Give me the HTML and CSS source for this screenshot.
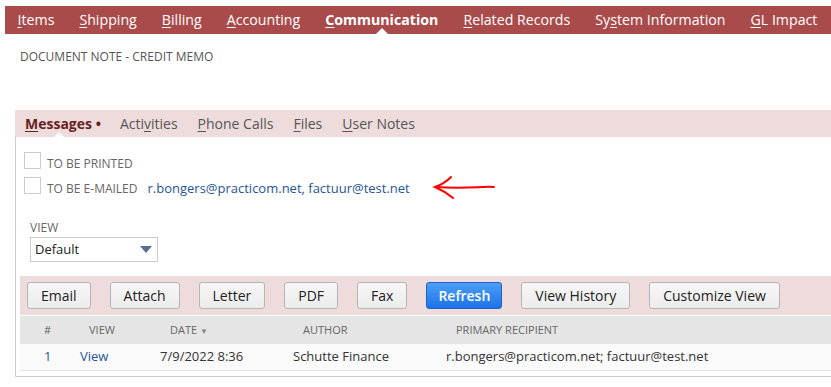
FILE: index.html
```html
<!DOCTYPE html>
<html lang="en">
<head>
	<meta charset="UTF-8">
	<meta name="viewport" content="width=device-width, initial-scale=1.0">
	<link rel="stylesheet" href="styles.css">
	<title>Credit Memo - Communication</title>
</head>
<body>
	<nav class="tabs">
		<a class="tab"><u>I</u>tems</a>
		<a class="tab"><u>S</u>hipping</a>
		<a class="tab"><u>B</u>illing</a>
		<a class="tab"><u>A</u>ccounting</a>
		<a class="tab is-active"><u>C</u>ommunication</a>
		<a class="tab"><u>R</u>elated Records</a>
		<a class="tab">Sy<u>s</u>tem Information</a>
		<a class="tab"><u>G</u>L Impact</a>
	</nav>

	<div class="doc-note">DOCUMENT NOTE - CREDIT MEMO</div>

	<section class="panel">
		<nav class="subtabs">
			<a class="subtab is-active"><u>M</u>essages •</a>
			<a class="subtab">Acti<u>v</u>ities</a>
			<a class="subtab"><u>P</u>hone Calls</a>
			<a class="subtab"><u>F</u>iles</a>
			<a class="subtab"><u>U</u>ser Notes</a>
		</nav>

		<div class="fields">
			<label class="check-row"><span class="box"></span><span class="lbl">TO BE PRINTED</span></label>
			<label class="check-row"><span class="box"></span><span class="lbl">TO BE E-MAILED</span><span class="addr">r.bongers@practicom.net, factuur@test.net</span></label>

			<svg class="arrow" width="70" height="30" viewBox="0 0 70 30">
				<path d="M62 13 C50 12 36 15 4 13" fill="none" stroke="#ff0000" stroke-width="2" stroke-linecap="round"/>
				<path d="M19 3 C14 8 9 11 3 13 C10 16 15 19 21 24" fill="none" stroke="#ff0000" stroke-width="2" stroke-linecap="round"/>
			</svg>

			<div class="view-field">
				<div class="view-lbl">VIEW</div>
				<div class="select"><span>Default</span><span class="caret"></span></div>
			</div>
		</div>

		<div class="btnbar">
			<button class="btn">Email</button>
			<button class="btn">Attach</button>
			<button class="btn">Letter</button>
			<button class="btn">PDF</button>
			<button class="btn">Fax</button>
			<button class="btn btn-primary">Refresh</button>
			<button class="btn">View History</button>
			<button class="btn">Customize View</button>
		</div>

		<div class="grid">
			<div class="row head">
				<div class="c1">#</div>
				<div class="c2">VIEW</div>
				<div class="c3">DATE <span class="sort">▼</span></div>
				<div class="c4">AUTHOR</div>
				<div class="c5">PRIMARY RECIPIENT</div>
			</div>
			<div class="row body">
				<div class="c1 link">1</div>
				<div class="c2 link">View</div>
				<div class="c3">7/9/2022 8:36</div>
				<div class="c4">Schutte Finance</div>
				<div class="c5">r.bongers@practicom.net; factuur@test.net</div>
			</div>
		</div>
	</section>
</body>
</html>
```

FILE: styles.css
```css
* {
  box-sizing: border-box;
  margin: 0;
  padding: 0;
}
html {
  background: #fff;
  font: 400 13px/1.4 "Open Sans", "Liberation Sans", sans-serif;
  color: #333;
}
body {
  width: 831px;
  overflow: hidden;
}
u {
  text-decoration: underline;
  text-underline-offset: 2px;
}

/* main tabs */
.tabs {
  display: flex;
  align-items: center;
  margin: 6px 0 0 5px;
  height: 28px;
  background: #aa4b4b;
}
.tab {
  position: relative;
  padding: 0 12.5px;
  color: #fff;
  font-size: 14.2px;
  line-height: 28px;
  white-space: nowrap;
}
.tab.is-active {
  font-weight: 700;
}
.tab.is-active::after {
  position: absolute;
  left: 50%;
  bottom: 0;
  margin-left: -6px;
  border: 6px solid transparent;
  border-bottom-color: #fff;
  border-top-width: 0;
  content: '';
}

.doc-note {
  margin: 16px 0 0 20px;
  color: #555;
  font-size: 12px;
  line-height: 14px;
}

/* panel */
.panel {
  margin: 46px 0 0 15px;
  padding-bottom: 5px;
  border-left: 1px solid #ccc;
  border-bottom: 1px solid #ccc;
}
.subtabs {
  display: flex;
  align-items: center;
  height: 27px;
  margin-left: -1px;
  padding-left: 10px;
  background: #eedcdc;
}
.subtab {
  position: relative;
  margin-right: 20px;
  color: #555;
  font-size: 14px;
  line-height: 27px;
  white-space: nowrap;
}
.subtab.is-active {
  margin-right: 19px;
  color: #6b1e1e;
  font-weight: 700;
}
.subtab.is-active::after {
  position: absolute;
  left: 50%;
  bottom: 0;
  margin-left: -9px;
  border: 5px solid transparent;
  border-bottom-color: #fff;
  border-top-width: 0;
  content: '';
}

.fields {
  position: relative;
  padding: 15px 0 0 8px;
}
.check-row {
  display: flex;
  align-items: flex-start;
  height: 16px;
  margin-bottom: 9px;
}
.box {
  flex: none;
  width: 17px;
  height: 17px;
  border: 1px solid #ccc;
  background: #fff;
}
.lbl {
  margin: 4px 0 0 6px;
  color: #666;
  font-size: 12px;
  line-height: 16px;
}
.addr {
  margin: 3px 0 0 10px;
  color: #255599;
  font-size: 13px;
  line-height: 16px;
}
.arrow {
  position: absolute;
  left: 416px;
  top: 37px;
}

.view-field {
  margin: 28px 0 0 6px;
}
.view-lbl {
  color: #666;
  font-size: 12px;
  line-height: 14px;
}
.select {
  display: flex;
  align-items: center;
  justify-content: space-between;
  width: 128px;
  height: 25px;
  margin-top: 2px;
  padding: 0 5px 0 4px;
  border: 1px solid #ccc;
  color: #222;
  font-size: 13px;
}
.caret {
  border: 6px solid transparent;
  border-top: 7px solid #5a6c88;
  border-bottom-width: 0;
}

/* buttons */
.btnbar {
  display: flex;
  align-items: center;
  gap: 19px;
  height: 40px;
  margin: 14px 0 0 4px;
  padding-left: 7px;
  background: #eedcdc;
  border-bottom: 1px solid #fff;
}
.btn {
  height: 27px;
  padding: 0 13px;
  border: 1px solid #b5b5b5;
  border-radius: 3px;
  background: linear-gradient(#f6f6f6, #ececec);
  color: #222;
  font: 400 14px "Open Sans", "Liberation Sans", sans-serif;
}
.btn-primary {
  padding: 0 11px;
  border-color: #1d63c5;
  background: linear-gradient(#4d9ef8, #1c73e6);
  color: #fff;
  font-weight: 600;
}

/* list */
.grid {
  margin-left: 4px;
}
.row {
  display: grid;
  grid-template-columns: 60px 80px 133px 153px 1fr;
  align-items: center;
}
.row.head {
  height: 28px;
  background: #e5e5e5;
  color: #666;
  font-size: 11px;
}
.row.head > div {
  padding-left: 10px;
}
.row.head > .c1 {
  padding-left: 24px;
}
.row.head > .c2 {
  padding-left: 9px;
}
.row.body {
  height: 27px;
  padding-bottom: 2px;
  background: #fafafa;
  border-bottom: 1px solid #e3e3e3;
  color: #333;
  font-size: 13px;
}
.row.body > .c1 {
  padding-left: 24px;
}
.sort {
  font-size: 8px;
  color: #888;
}
.link {
  color: #255599;
}
```
